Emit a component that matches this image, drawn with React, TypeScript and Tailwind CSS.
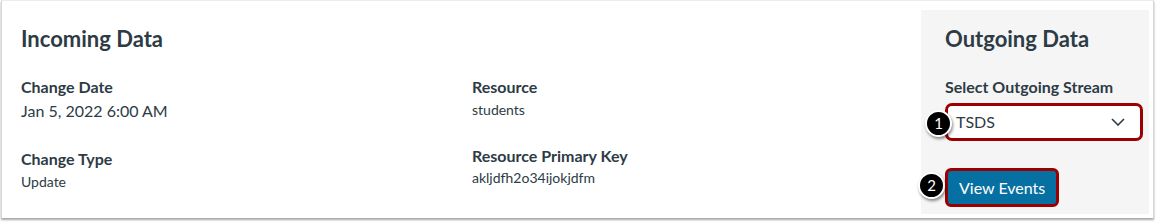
import React from "react";

const font = { fontFamily: "Lato, 'Open Sans', sans-serif" };

function Field(props: { label: string; value: string; big?: boolean; gap: string }) {
    return (
        <div className="flex flex-col">
            <span className="text-[16px] leading-[20px] font-bold text-[#2d3b45]">{props.label}</span>
            <span className={(props.big ? "text-[16px] leading-[24px] " : "text-[14px] leading-[22px] ") + props.gap + " text-[#2d3b45]"}>
                {props.value}
            </span>
        </div>
    );
}

function Step(props: { n: number }) {
    return (
        <span className="absolute w-[27px] h-[27px] rounded-full bg-black border-2 border-white text-white text-[15px] flex items-center justify-center shadow-[1px_2px_3px_rgba(0,0,0,0.45)]">
            {props.n}
        </span>
    );
}

export default function App() {
    return (
        <div className="w-[1156px] h-[222px] bg-white" style={font}>
            <div className="ml-[1px] w-[1153px] h-[218px] flex bg-white border-l border-r border-t border-[#d6d6d6] border-t-[#ececec] shadow-[0_2px_2px_rgba(0,0,0,0.35)]">
                <div className="flex-1 pl-[19px] pt-[24px]">
                    <h2 className="text-[22px] leading-[28px] font-bold text-[#2d3b45]">Incoming Data</h2>
                    <div className="flex mt-[24px]">
                        <div className="w-[451px] flex flex-col gap-[26px]">
                            <Field label="Change Date" value="Jan 5, 2022 6:00 AM" big gap="mt-[2px]" />
                            <Field label="Change Type" value="Update" gap="mt-[2px]" />
                        </div>
                        <div className="flex flex-col gap-[25px]">
                            <Field label="Resource" value="students" gap="mt-[2px]" />
                            <Field label="Resource Primary Key" value="akljdfh2o34ijokjdfm" gap="mt-[1px]" />
                        </div>
                    </div>
                </div>
                <div className="w-[228px] mt-[9px] mb-[4px] mr-[4px] bg-[#f5f5f5] pl-[24px] pt-[15px]">
                    <h2 className="text-[22px] leading-[28px] font-bold text-[#2d3b45]">Outgoing Data</h2>
                    <div className="mt-[24px] text-[16px] leading-[20px] font-bold text-[#2d3b45]">Select Outgoing Stream</div>
                    <div className="relative mt-[6px] w-[198px]">
                        <div className="-ml-[20px] top-[7px] left-0 absolute">
                            <Step n={1} />
                        </div>
                        <div className="h-[38px] rounded-[7px] border-[3px] border-[#9b0000] bg-white flex items-center justify-between pl-[8px] pr-[15px]">
                            <span className="text-[16px] text-[#2d3b45]">TSDS</span>
                            <svg width="14" height="8" viewBox="0 0 14 8" fill="none">
                                <path d="M1 1l6 6 6-6" stroke="#2d3b45" strokeWidth="1.6" />
                            </svg>
                        </div>
                    </div>
                    <div className="relative mt-[27px] w-fit">
                        <div className="absolute -left-[27px] top-[4px]">
                            <Step n={2} />
                        </div>
                        <button className="h-[39px] px-[11px] rounded-[6px] border-[3px] border-[#9b0000] bg-[#0770a3] text-white text-[16px]">
                            View Events
                        </button>
                    </div>
                </div>
            </div>
        </div>
    );
}
